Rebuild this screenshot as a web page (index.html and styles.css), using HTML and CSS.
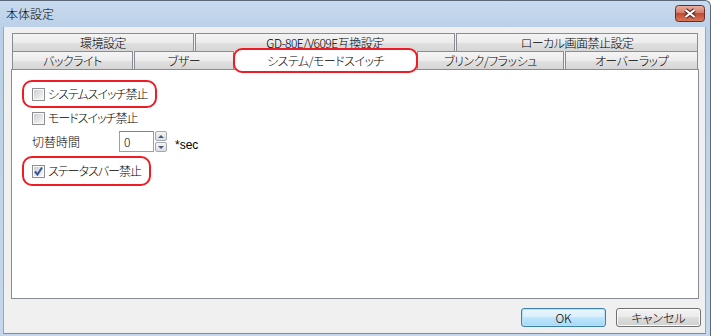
FILE: index.html
```html
<!DOCTYPE html>
<html lang="ja">

<head>
    <meta charset="UTF-8" />
    <title>本体設定</title>
    <link rel="stylesheet" href="styles.css">
</head>

<body>
    <div class="window">
        <div class="titlebar">
            <span class="title">本体設定</span>
            <span class="close">
                <svg width="30" height="17" viewBox="0 0 30 17">
                    <defs>
                        <linearGradient id="closeGrad" x1="0" y1="0" x2="0" y2="1">
                            <stop offset="0" stop-color="#eab0a2" />
                            <stop offset="0.5" stop-color="#d27a66" />
                            <stop offset="0.5" stop-color="#c14a31" />
                            <stop offset="1" stop-color="#d87a5e" />
                        </linearGradient>
                    </defs>
                    <rect x="0.5" y="0.5" width="29" height="16" rx="3" fill="url(#closeGrad)" stroke="#6b2c26" />
                    <path d="M10.5 5 L19.5 12 M19.5 5 L10.5 12" stroke="#5a2c26" stroke-width="4.2" />
                    <path d="M10.5 5 L19.5 12 M19.5 5 L10.5 12" stroke="#fff" stroke-width="2.2" />
                </svg>
            </span>
        </div>

        <div class="client">
            <div class="tabs">
                <div class="tab-row">
                    <div class="tab tab-env">環境設定</div>
                    <div class="tab tab-compat">GD-80E/V609E互換設定</div>
                    <div class="tab tab-local">ローカル画面禁止設定</div>
                </div>
                <div class="tab-row">
                    <div class="tab tab-back">バックライト</div>
                    <div class="tab tab-buzz">ブザー</div>
                    <div class="tab tab-active">システム/モードスイッチ</div>
                    <div class="tab tab-blink">ブリンク/フラッシュ</div>
                    <div class="tab tab-over">オーバーラップ</div>
                </div>
            </div>

            <div class="panel">
                <div class="mark">
                    <label class="check"><span class="box"></span>システムスイッチ禁止</label>
                </div>
                <div class="row">
                    <label class="check"><span class="box"></span>モードスイッチ禁止</label>
                </div>
                <div class="row time">
                    <span class="label">切替時間</span>
                    <span class="field">0</span>
                    <span class="spin">
                        <span class="spin-btn"><i class="arrow-up"></i></span>
                        <span class="spin-btn"><i class="arrow-down"></i></span>
                    </span>
                    <span class="unit">*sec</span>
                </div>
                <div class="mark mark-last">
                    <label class="check">
                        <span class="box">
                            <svg width="11" height="11" viewBox="0 0 11 11">
                                <path d="M2 5.5 L4.5 8.5 L9 1.5" fill="none" stroke="#3b5796" stroke-width="2" />
                            </svg>
                        </span>ステータスバー禁止</label>
                </div>
            </div>

            <div class="actions">
                <button class="btn btn-default">OK</button>
                <button class="btn">キャンセル</button>
            </div>
        </div>
    </div>
</body>

</html>
```

FILE: styles.css
```css
* {
    box-sizing: border-box;
}

body {
    margin: 0;
    font-family: "Noto Sans CJK JP", "Noto Sans", sans-serif;
    font-size: 12px;
    font-weight: 300;
    font-feature-settings: "palt";
    color: #000;
}

.window {
    width: 711px;
    height: 336px;
    display: flex;
    flex-direction: column;
    background: linear-gradient(#c8daee, #bad0e8 28px, #c4d7ec);
    border-top: 1px solid #5b6778;
    border-right: 1px solid #5b6778;
    border-top-right-radius: 6px;
    overflow: hidden;
}

.titlebar {
    height: 26px;
    display: flex;
    justify-content: space-between;
    align-items: center;
    padding: 0 5px 0 6px;
    flex-shrink: 0;
}

.title {
    line-height: 14px;
}

.close {
    align-self: flex-start;
    margin-top: 4px;
    display: flex;
}

.client {
    flex: 1;
    margin: 0 4px 2px 3px;
    padding: 6px 4px 0 7px;
    background: #f0f0f0;
    border-left: 1px solid #8fa9c4;
    border-right: 1px solid #8fa9c4;
    border-bottom: 1px solid #2fa8dc;
    display: flex;
    flex-direction: column;
}

/* tabs */

.tabs {
    margin-left: 1px;
    width: 686px;
}

.tab-row {
    display: flex;
    gap: 1px;
    height: 18px;
    align-items: flex-start;
}

.tab {
    height: 18px;
    border: 1px solid #898c95;
    border-bottom: none;
    background: linear-gradient(#f4f4f4, #ececec 50%, #e0e0e0 55%, #d6d6d6);
    text-align: center;
    line-height: 17px;
    letter-spacing: -0.5px;
    white-space: nowrap;
}

.tab-env { width: 182px; }
.tab-compat { width: 260px; }
.tab-local { width: 242px; }
.tab-back { width: 121px; }
.tab-buzz { width: 100px; }
.tab-blink { width: 147px; }
.tab-over { width: 133px; }

.tab-active {
    position: relative;
    z-index: 1;
    width: 185px;
    height: 25px;
    margin: -3px -2px 0;
    border: 2px solid #ee1c24;
    border-radius: 9px;
    background: #fff;
    line-height: 21px;
}

/* panel */

.panel {
    width: 688px;
    height: 230px;
    border: 1px solid #898c95;
    background: #fff;
    padding: 10px 0 0 10px;
    display: flex;
    flex-direction: column;
    align-items: flex-start;
}

.mark {
    height: 28px;
    border: 2px solid #ee1c24;
    border-radius: 10px;
    padding: 0 8px;
    display: flex;
    align-items: center;
}

.mark-last {
    margin-top: 4px;
    height: 30px;
}

.row {
    height: 20px;
    padding-left: 10px;
    display: flex;
    align-items: center;
}

.check {
    display: flex;
    align-items: center;
    gap: 3px;
    line-height: 14px;
    letter-spacing: -1px;
}

.box {
    width: 13px;
    height: 13px;
    border: 1px solid #8e8f8f;
    padding: 1px;
    background: linear-gradient(135deg, #cbcfd5, #f7f7f7) content-box, #fafafa;
    display: flex;
    align-items: center;
    justify-content: center;
}

.box svg {
    margin: -1px;
}

.time {
    margin-top: 3px;
    height: 21px;
    align-items: stretch;
}

.label {
    width: 87px;
    display: flex;
    align-items: center;
}

.field {
    width: 35px;
    border: 1px solid #7fa6d2;
    border-top-color: #5d8cc0;
    padding-left: 4px;
    line-height: 19px;
    background: #fff;
}

.spin {
    margin-left: 1px;
    width: 12px;
    display: flex;
    flex-direction: column;
    gap: 1px;
}

.spin-btn {
    flex: 1;
    border: 1px solid #a3a9b2;
    border-radius: 2px;
    background: linear-gradient(#f5f5f5, #dcdde0);
    display: flex;
    align-items: center;
    justify-content: center;
}

.arrow-up,
.arrow-down {
    width: 0;
    height: 0;
    border-left: 3px solid transparent;
    border-right: 3px solid transparent;
}

.arrow-up {
    border-bottom: 3px solid #4a5d80;
}

.arrow-down {
    border-top: 3px solid #4a5d80;
}

.unit {
    margin-left: 8px;
    align-self: flex-end;
    font-family: "Liberation Sans", sans-serif;
    font-weight: 400;
    line-height: 14px;
}

/* buttons */

.actions {
    display: flex;
    justify-content: flex-end;
    gap: 10px;
    margin-top: 9px;
}

.btn {
    width: 85px;
    height: 19px;
    padding: 0;
    border: 1px solid #707070;
    border-radius: 3px;
    background: linear-gradient(#f3f3f3, #ebebeb 45%, #dddddd 50%, #d0d0d0);
    box-shadow: inset 0 0 0 1px #fbfbfb;
    font: inherit;
    font-feature-settings: "palt";
    line-height: 16px;
    color: #000;
}

.btn-default {
    border-color: #3c7fb1;
    background: linear-gradient(#eaf6fd, #d9f0fc 45%, #bee6fd 50%, #a7d9f5);
    box-shadow: inset 0 0 0 1px #b6e3f8;
}
```
